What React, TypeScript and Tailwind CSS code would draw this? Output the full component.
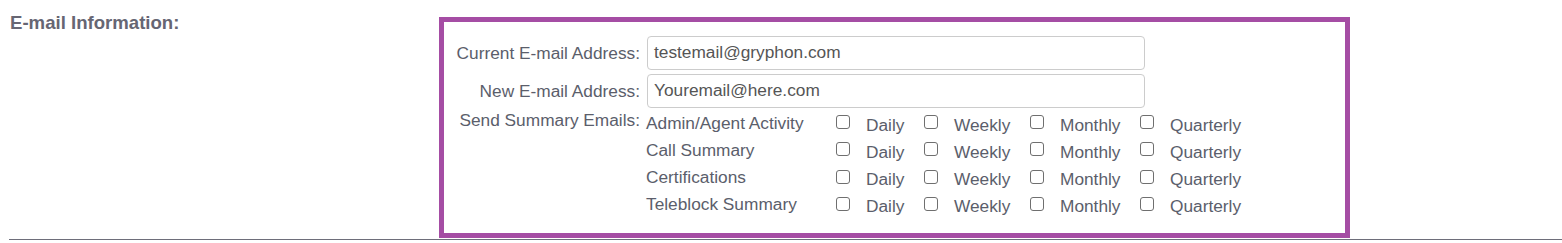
import React from "react";

const activities = ["Admin/Agent Activity", "Call Summary", "Certifications", "Teleblock Summary"];

const periods = [
  { name: "Daily", width: "w-[88px]" },
  { name: "Weekly", width: "w-[106px]" },
  { name: "Monthly", width: "w-[110px]" },
  { name: "Quarterly", width: "w-[120px]" },
];

function Checkbox() {
  return <span className="block w-[14px] h-[14px] shrink-0 rounded-[3px] border border-[#6f6f6f] bg-white" />;
}

export default function App() {
  return (
    <div className="w-[1562px] h-[243px] bg-white font-['Liberation_Sans',Arial,sans-serif] text-[17.3px] text-[#5b5e6b]">
      <div className="ml-[9px] flex border-b border-[#6e6e7a] pb-[1px]">
        {/* Section title */}
        <div className="w-[430px] pl-[1px] pt-[11px]">
          <h2 className="text-[18.6px] font-bold leading-[24px] text-[#666673]">E-mail Information:</h2>
        </div>

        {/* Purple box */}
        <div className="mt-[17px] h-[221px] w-[911px] border-[5px] border-[#a54da4] bg-white">
          <div className="pt-[14px]">
            <div className="flex items-center">
              <label className="w-[196px] text-right leading-[20px]">Current E-mail Address:</label>
              <div className="ml-[7px] flex h-[34px] w-[498px] items-center rounded-[4px] border border-[#cccccc] px-[6px] text-[#555555]">
                testemail@gryphon.com
              </div>
            </div>
            <div className="mt-[4px] flex items-center">
              <label className="w-[196px] text-right leading-[20px]">New E-mail Address:</label>
              <div className="ml-[7px] flex h-[34px] w-[498px] items-center rounded-[4px] border border-[#cccccc] px-[6px] text-[#555555]">
                Youremail@here.com
              </div>
            </div>

            <div className="flex">
              <label className="w-[196px] -mt-[1px] text-right leading-[27.3px]">Send Summary Emails:</label>
              <div className="ml-[6px]">
                {activities.map((a) => (
                  <div key={a} className="flex h-[27.3px] items-start">
                    <span className="w-[190px] mt-[1.5px] leading-[27.3px]">{a}</span>
                    {periods.map((p) => (
                      <div key={p.name} className={`${p.width} flex items-start`}>
                        <span className="mt-[7px]">
                          <Checkbox />
                        </span>
                        <span className="ml-[16px] mt-[3.5px] leading-[27.3px]">{p.name}</span>
                      </div>
                    ))}
                  </div>
                ))}
              </div>
            </div>
          </div>
        </div>
      </div>
    </div>
  );
}
